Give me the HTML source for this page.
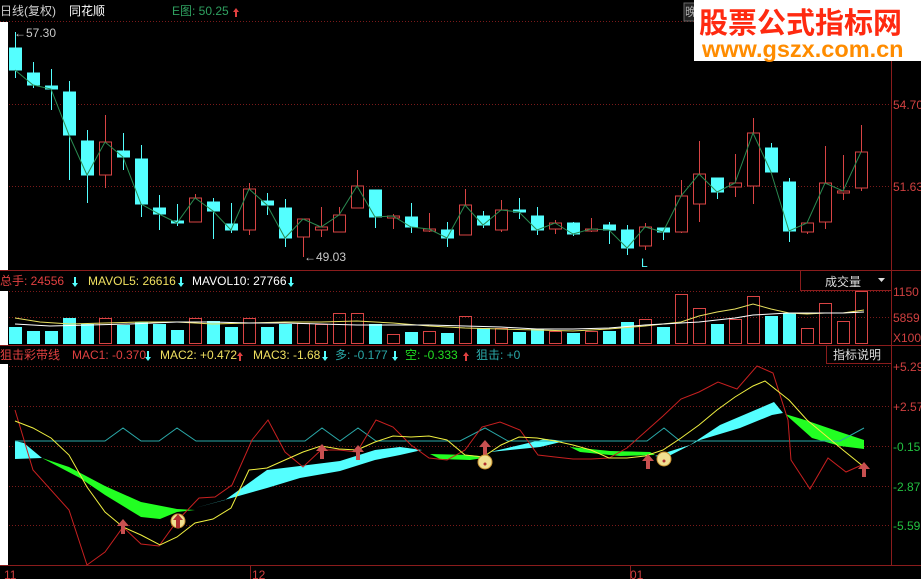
<!DOCTYPE html>
<html><head><meta charset="utf-8"><style>
body{margin:0;background:#000;width:921px;height:579px;overflow:hidden;font-family:"Liberation Sans","Noto Sans CJK SC",sans-serif}
svg{position:absolute;left:0;top:0}
text{font-family:"Liberation Sans","Noto Sans CJK SC",sans-serif;font-size:12px}
</style></head><body>
<svg width="921" height="579" viewBox="0 0 921 579">
<rect width="921" height="579" fill="#000"/>
<g stroke="#7a1a1a" stroke-dasharray="1,2" stroke-width="1">
<line x1="0" y1="21.5" x2="891" y2="21.5"/>
<line x1="0" y1="104.5" x2="891" y2="104.5"/>
<line x1="0" y1="186.5" x2="891" y2="186.5"/>
<line x1="0" y1="291.5" x2="891" y2="291.5"/>
<line x1="0" y1="317.5" x2="891" y2="317.5"/>
<line x1="0" y1="366.5" x2="891" y2="366.5"/>
<line x1="0" y1="406.5" x2="891" y2="406.5"/>
<line x1="0" y1="446.5" x2="891" y2="446.5"/>
<line x1="0" y1="486.5" x2="891" y2="486.5"/>
<line x1="0" y1="525.5" x2="891" y2="525.5"/>
</g>
<g fill="#fff">
<rect x="0" y="22" width="8" height="248"/>
<rect x="0" y="291" width="8" height="54"/>
<rect x="0" y="364" width="8" height="201"/>
</g>
<g stroke="#8a1c1c" stroke-width="1" fill="none">
<line x1="891.5" y1="0" x2="891.5" y2="566"/>
<line x1="0" y1="270.5" x2="921" y2="270.5"/>
<line x1="0" y1="345.5" x2="921" y2="345.5"/>
<rect x="800.5" y="270.5" width="91" height="20"/>
<rect x="826.5" y="345.5" width="65" height="18"/>
</g>
<text x="0" y="15" fill="#d0d0d0">日线(复权)</text>
<text x="69" y="15" fill="#ffffff">同花顺</text>
<text x="172" y="15" fill="#2fa060">E图: 50.25</text>
<path d="M236 8 l3 4 h-2 v5 h-2 v-5 h-2z" fill="#e04040"/>
<rect x="684" y="3" width="14" height="18" fill="#222" stroke="#666"/>
<text x="685" y="16" fill="#aaa">晚</text>
<rect x="694" y="0" width="227" height="61" fill="#fff"/>
<text x="699" y="33" fill="#ff2a10" style="font-size:29px;font-weight:bold">股票公式指标网</text>
<text x="702" y="57" fill="#ff8c00" style="font-size:23.5px;font-weight:bold">www.gszx.com.cn</text>
<text x="893" y="109" fill="#d04040">54.70</text>
<text x="893" y="191" fill="#d04040">51.63</text>
<text x="14" y="37" fill="#c8c8c8">←57.30</text>
<line x1="15.5" y1="32" x2="15.5" y2="40" stroke="#54ffff"/>
<text x="304" y="261" fill="#c8c8c8">←49.03</text>
<text x="641" y="267" fill="#54ffff">L</text>
<g stroke-width="1">
<g stroke="#54ffff" fill="#54ffff">
<line x1="15.5" y1="33" x2="15.5" y2="78"/><rect x="9.5" y="48" width="12" height="22"/>
<line x1="33.5" y1="62" x2="33.5" y2="88"/><rect x="27.5" y="73" width="12" height="12"/>
<line x1="51.5" y1="69" x2="51.5" y2="110"/><rect x="45.5" y="86" width="12" height="3"/>
<line x1="69.5" y1="81" x2="69.5" y2="180"/><rect x="63.5" y="92" width="12" height="43"/>
<line x1="87.5" y1="130" x2="87.5" y2="203"/><rect x="81.5" y="141" width="12" height="34"/>
<line x1="123.5" y1="133" x2="123.5" y2="170"/><rect x="117.5" y="151" width="12" height="6"/>
<line x1="141.5" y1="145" x2="141.5" y2="217"/><rect x="135.5" y="159" width="12" height="45"/>
<line x1="159.5" y1="195" x2="159.5" y2="230"/><rect x="153.5" y="208" width="12" height="6"/>
<line x1="177.5" y1="204" x2="177.5" y2="226"/><rect x="171.5" y="221" width="12" height="2"/>
<line x1="213.5" y1="198" x2="213.5" y2="239"/><rect x="207.5" y="202" width="12" height="9"/>
<line x1="231.5" y1="203" x2="231.5" y2="233"/><rect x="225.5" y="224" width="12" height="6"/>
<line x1="267.5" y1="193" x2="267.5" y2="215"/><rect x="261.5" y="201" width="12" height="4"/>
<line x1="285.5" y1="199" x2="285.5" y2="247"/><rect x="279.5" y="208" width="12" height="30"/>
<line x1="375.5" y1="190" x2="375.5" y2="228"/><rect x="369.5" y="190" width="12" height="27"/>
<line x1="411.5" y1="203" x2="411.5" y2="233"/><rect x="405.5" y="217" width="12" height="10"/>
<line x1="447.5" y1="222" x2="447.5" y2="247"/><rect x="441.5" y="230" width="12" height="8"/>
<line x1="483.5" y1="211" x2="483.5" y2="228"/><rect x="477.5" y="216" width="12" height="9"/>
<line x1="519.5" y1="198" x2="519.5" y2="219"/><rect x="513.5" y="210" width="12" height="2"/>
<line x1="537.5" y1="207" x2="537.5" y2="235"/><rect x="531.5" y="216" width="12" height="14"/>
<line x1="573.5" y1="222" x2="573.5" y2="236"/><rect x="567.5" y="223" width="12" height="11"/>
<line x1="609.5" y1="222" x2="609.5" y2="244"/><rect x="603.5" y="225" width="12" height="5"/>
<line x1="627.5" y1="225" x2="627.5" y2="255"/><rect x="621.5" y="230" width="12" height="18"/>
<line x1="663.5" y1="228" x2="663.5" y2="240"/><rect x="657.5" y="228" width="12" height="4"/>
<line x1="717.5" y1="178" x2="717.5" y2="199"/><rect x="711.5" y="178" width="12" height="14"/>
<line x1="771.5" y1="143" x2="771.5" y2="172"/><rect x="765.5" y="148" width="12" height="24"/>
<line x1="789.5" y1="178" x2="789.5" y2="242"/><rect x="783.5" y="182" width="12" height="49"/>
</g>
<g stroke="#d84444" fill="#000">
<line x1="105.5" y1="115" x2="105.5" y2="188"/><rect x="99.5" y="142" width="12" height="33"/>
<line x1="195.5" y1="194" x2="195.5" y2="222"/><rect x="189.5" y="198" width="12" height="24"/>
<line x1="249.5" y1="183" x2="249.5" y2="235"/><rect x="243.5" y="189" width="12" height="41"/>
<line x1="303.5" y1="219" x2="303.5" y2="257"/><rect x="297.5" y="219" width="12" height="18"/>
<line x1="321.5" y1="207" x2="321.5" y2="237"/><rect x="315.5" y="227" width="12" height="3"/>
<line x1="339.5" y1="207" x2="339.5" y2="232"/><rect x="333.5" y="215" width="12" height="17"/>
<line x1="357.5" y1="170" x2="357.5" y2="208"/><rect x="351.5" y="186" width="12" height="22"/>
<line x1="393.5" y1="214" x2="393.5" y2="229"/><rect x="387.5" y="216" width="12" height="2"/>
<line x1="429.5" y1="213" x2="429.5" y2="232"/><rect x="423.5" y="229" width="12" height="2"/>
<line x1="465.5" y1="189" x2="465.5" y2="235"/><rect x="459.5" y="205" width="12" height="30"/>
<line x1="501.5" y1="200" x2="501.5" y2="232"/><rect x="495.5" y="210" width="12" height="20"/>
<line x1="555.5" y1="220" x2="555.5" y2="234"/><rect x="549.5" y="223" width="12" height="6"/>
<line x1="591.5" y1="218" x2="591.5" y2="232"/><rect x="585.5" y="229" width="12" height="2"/>
<line x1="645.5" y1="223" x2="645.5" y2="250"/><rect x="639.5" y="227" width="12" height="19"/>
<line x1="681.5" y1="180" x2="681.5" y2="233"/><rect x="675.5" y="196" width="12" height="36"/>
<line x1="699.5" y1="141" x2="699.5" y2="222"/><rect x="693.5" y="174" width="12" height="30"/>
<line x1="735.5" y1="154" x2="735.5" y2="197"/><rect x="729.5" y="183" width="12" height="4"/>
<line x1="753.5" y1="118" x2="753.5" y2="204"/><rect x="747.5" y="133" width="12" height="53"/>
<line x1="807.5" y1="223" x2="807.5" y2="234"/><rect x="801.5" y="223" width="12" height="9"/>
<line x1="825.5" y1="146" x2="825.5" y2="229"/><rect x="819.5" y="183" width="12" height="39"/>
<line x1="843.5" y1="155" x2="843.5" y2="200"/><rect x="837.5" y="191" width="12" height="2"/>
<line x1="861.5" y1="125" x2="861.5" y2="191"/><rect x="855.5" y="152" width="12" height="36"/>
</g>
</g>
<polyline fill="none" stroke="#2a8a50" stroke-width="1" points="15,70 33,85 51,89 69,135 87,175 105,142 123,157 141,204 159,214 177,223 195,198 213,211 231,230 249,189 267,205 285,238 303,219 321,227 339,215 357,186 375,217 393,216 411,227 429,229 447,238 465,205 483,225 501,210 519,212 537,230 555,223 573,234 591,229 609,230 627,248 645,227 663,232 681,196 699,174 717,192 735,183 753,133 771,172 789,231 807,223 825,183 843,191 861,152"/>
<text x="0" y="285" fill="#e04040">总手: 24556</text>
<path d="M74 277 v6 h-2 l3 4 3-4 h-2 v-6z" fill="#54ffff"/>
<text x="88" y="285" fill="#f0e060">MAVOL5: 26616</text>
<path d="M180 277 v6 h-2 l3 4 3-4 h-2 v-6z" fill="#54ffff"/>
<text x="192" y="285" fill="#ffffff">MAVOL10: 27766</text>
<path d="M290 277 v6 h-2 l3 4 3-4 h-2 v-6z" fill="#54ffff"/>
<text x="825" y="286" fill="#ddd">成交量</text>
<path d="M878 278 h7 l-3.5 4z" fill="#ddd"/>
<text x="893" y="296" fill="#d04040">1150</text>
<text x="893" y="322" fill="#d04040">5859</text>
<text x="893" y="342" fill="#d04040">X100</text>
<g fill="#54ffff">
<rect x="9" y="327" width="13" height="17"/><rect x="27" y="331" width="13" height="13"/><rect x="45" y="331" width="13" height="13"/><rect x="63" y="318" width="13" height="26"/><rect x="81" y="324" width="13" height="20"/><rect x="117" y="325" width="13" height="19"/><rect x="135" y="322" width="13" height="22"/><rect x="153" y="324" width="13" height="20"/><rect x="171" y="330" width="13" height="14"/><rect x="207" y="321" width="13" height="23"/><rect x="225" y="327" width="13" height="17"/><rect x="261" y="327" width="13" height="17"/><rect x="279" y="324" width="13" height="20"/><rect x="369" y="324" width="13" height="20"/><rect x="405" y="332" width="13" height="12"/><rect x="441" y="333" width="13" height="11"/><rect x="477" y="328" width="13" height="16"/><rect x="513" y="332" width="13" height="12"/><rect x="531" y="329" width="13" height="15"/><rect x="567" y="333" width="13" height="11"/><rect x="603" y="331" width="13" height="13"/><rect x="621" y="322" width="13" height="22"/><rect x="657" y="327" width="13" height="17"/><rect x="711" y="324" width="13" height="20"/><rect x="765" y="316" width="13" height="28"/><rect x="783" y="313" width="13" height="31"/>
</g>
<g fill="none" stroke="#d84444">
<rect x="99.5" y="318.5" width="12" height="25"/><rect x="189.5" y="318.5" width="12" height="25"/><rect x="243.5" y="318.5" width="12" height="25"/><rect x="297.5" y="323.5" width="12" height="20"/><rect x="315.5" y="324.5" width="12" height="19"/><rect x="333.5" y="313.5" width="12" height="30"/><rect x="351.5" y="313.5" width="12" height="30"/><rect x="387.5" y="334.5" width="12" height="9"/><rect x="423.5" y="331.5" width="12" height="12"/><rect x="459.5" y="316.5" width="12" height="27"/><rect x="495.5" y="328.5" width="12" height="15"/><rect x="549.5" y="331.5" width="12" height="12"/><rect x="585.5" y="331.5" width="12" height="12"/><rect x="639.5" y="319.5" width="12" height="24"/><rect x="675.5" y="294.5" width="12" height="49"/><rect x="693.5" y="308.5" width="12" height="35"/><rect x="729.5" y="319.5" width="12" height="24"/><rect x="747.5" y="296.5" width="12" height="47"/><rect x="801.5" y="328.5" width="12" height="15"/><rect x="819.5" y="303.5" width="12" height="40"/><rect x="837.5" y="321.5" width="12" height="22"/><rect x="855.5" y="291.5" width="12" height="52"/>
</g>
<polyline fill="none" stroke="#e8e060" points="15,318 40,322 70,324 105,323 141,322 177,322 213,324 249,323 285,322 321,322 357,321 393,323 429,326 465,328 501,329 537,330 573,331 609,329 645,326 681,322 699,316 717,312 735,309 753,304 771,309 789,313 807,314 825,313 843,313 864,310"/>
<polyline fill="none" stroke="#ffffff" points="15,324 50,326 90,325 130,324 177,322 213,322 249,323 285,323 321,324 357,325 393,325 429,325 465,326 501,327 537,329 573,329 609,328 645,325 681,323 699,322 717,320 735,318 753,315 771,314 789,313 807,313 825,313 843,313 864,312"/>
<text x="0" y="359" fill="#e04040">狙击彩带线</text>
<text x="72" y="359" fill="#e04040">MAC1: -0.370</text>
<path d="M147 351 v6 h-2 l3 4 3-4 h-2 v-6z" fill="#54ffff"/>
<text x="160" y="359" fill="#f0e060">MAC2: +0.472</text>
<path d="M240 352 l3 4 h-2 v5 h-2 v-5 h-2z" fill="#e04040"/>
<text x="253" y="359" fill="#f0e060">MAC3: -1.68</text>
<path d="M324 351 v6 h-2 l3 4 3-4 h-2 v-6z" fill="#54ffff"/>
<text x="335" y="359" fill="#2aa8a8">多: -0.177</text>
<path d="M394 351 v6 h-2 l3 4 3-4 h-2 v-6z" fill="#54ffff"/>
<text x="405" y="359" fill="#22dd22">空: -0.333</text>
<path d="M466 352 l3 4 h-2 v5 h-2 v-5 h-2z" fill="#e04040"/>
<text x="476" y="359" fill="#2aa8a8">狙击: +0</text>
<text x="833" y="359" fill="#ddd">指标说明</text>
<text x="893" y="371" fill="#d04040">+5.29</text>
<text x="893" y="411" fill="#d04040">+2.57</text>
<text x="893" y="451" fill="#22c040">-0.15</text>
<text x="893" y="491" fill="#22c040">-2.87</text>
<text x="893" y="530" fill="#22c040">-5.59</text>
<line x1="0" y1="565.5" x2="921" y2="565.5" stroke="#8a1c1c"/>
<line x1="250.5" y1="566" x2="250.5" y2="579" stroke="#8a1c1c"/>
<line x1="630.5" y1="566" x2="630.5" y2="579" stroke="#8a1c1c"/>
<text x="4" y="579" fill="#d04040">11</text>
<text x="252" y="579" fill="#d04040">12</text>
<text x="630" y="579" fill="#d04040">01</text>
<polygon fill="#54ffff" points="15,441 24,443 42,458 15,459"/>
<polygon fill="#22ff22" points="42,458 69,467 105,486 141,502 177,509 195,510 177,512 160,519 141,517 105,495 80,478"/>
<polygon fill="#54ffff" points="195,508 225,500 267,470 300,466 340,461 375,450 400,447 422,450 400,455 375,460 340,471 300,478 267,488 235,497"/>
<polygon fill="#22ff22" points="430,454 470,455 490,457 470,460 440,459"/>
<polygon fill="#54ffff" points="490,452 520,445 545,439 565,441 540,447 510,450"/>
<polygon fill="#22ff22" points="570,447 610,451 650,452 655,455 620,456 580,452"/>
<polygon fill="#54ffff" points="655,456 690,445 720,425 760,408 774,402 783,413 772,415 740,428 700,440 665,458"/>
<polygon fill="#22ff22" points="785,414 805,420 840,432 864,440 864,449 840,446 812,438"/>
<polyline fill="none" stroke="#2aa8a8" points="15,441 105,441 123,428 141,441 159,441 177,428 196,441 305,441 322,428 340,441 358,428 376,441 460,441 485,428 508,441 645,441 647,441 664,428 680,441 840,441 864,428"/>
<polyline fill="none" stroke="#c82020" points="15,410 33,470 69,510 87,565 105,552 123,527 141,544 159,546 177,521 199,498 215,497 232,485 252,440 268,420 285,452 303,467 321,450 339,450 357,452 376,420 393,427 411,445 429,458 447,460 465,450 482,427 500,422 520,430 538,455 555,457 573,459 591,459 609,458 627,448 645,432 663,416 681,399 699,392 718,382 737,389 757,366 773,373 788,420 791,460 810,489 828,458 846,472 864,464"/>
<polyline fill="none" stroke="#f0f040" points="15,421 33,428 51,438 69,455 87,487 105,512 123,527 141,535 160,545 177,537 195,523 213,519 231,508 249,470 267,468 285,460 303,452 321,446 339,449 357,450 375,442 393,436 411,437 429,436 447,440 465,455 483,457 501,445 519,437 537,438 555,441 573,445 591,450 609,458 627,458 645,456 663,450 681,438 699,425 717,410 735,397 753,386 765,381 789,400 807,420 825,435 843,450 864,467"/>
<g fill="#c85050">
<path d="M123 519 l6 7 h-4 v8 h-4 v-8 h-4z"/>
<path d="M322 444 l6 7 h-4 v8 h-4 v-8 h-4z"/>
<path d="M358 445 l6 7 h-4 v8 h-4 v-8 h-4z"/>
<path d="M485 440 l6 7 h-4 v8 h-4 v-8 h-4z"/>
<path d="M648 454 l6 7 h-4 v8 h-4 v-8 h-4z"/>
<path d="M864 462 l6 7 h-4 v8 h-4 v-8 h-4z"/>
</g>
<g fill="#f0e090" stroke="#c89030">
<circle cx="178" cy="521" r="7"/><circle cx="485" cy="462" r="7"/><circle cx="664" cy="459" r="7"/>
</g>
<g fill="#b03030"><path d="M178 514 l5 6 h-3 v8 h-4 v-8 h-3z"/><circle cx="485" cy="464" r="1.5"/><circle cx="664" cy="461" r="1.5"/></g>
</svg>
</body></html>
